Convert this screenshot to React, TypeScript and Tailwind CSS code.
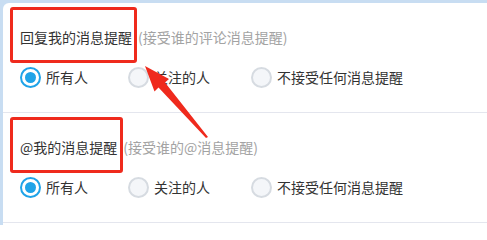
import React from 'react';

type Option = { label: string; checked?: boolean; width: string };

const RED = '#ef2a1d';

function Radio({ checked }: { checked?: boolean }) {
  return checked ? (
    <span className="flex h-[21px] w-[21px] shrink-0 items-center justify-center rounded-full border-2 border-[#1fa3e8] bg-white">
      <span className="h-[11px] w-[11px] rounded-full bg-[#1fa3e8]" />
    </span>
  ) : (
    <span className="h-[21px] w-[21px] shrink-0 rounded-full border-2 border-[#d6dbe1] bg-[#f4f6f9]" />
  );
}

function Section({ title, hint, boxRight, options }: { title: string; hint: string; boxRight: string; options: Option[] }) {
  return (
    <div className="border-b border-[#e4e6ee] px-[17px] pt-[24px] pb-[24px]">
      <div className="flex h-[20px] items-center text-[14px] leading-[20px]">
        <span className="relative text-[#333]">
          {title}
          <span
            className={`absolute top-[-20px] bottom-[-16px] left-[-10px] rounded-[3px] border-[3px] border-[#ef2a1d] ${boxRight}`}
          />
        </span>
        <span className="ml-[6px] text-[#a3a3a3]">{hint}</span>
      </div>
      <div className="mt-[19px] flex h-[22px] items-center text-[14px] text-[#333]">
        {options.map((o) => (
          <label key={o.label} className={`flex items-center gap-[5px] ${o.width}`}>
            <Radio checked={o.checked} />
            <span>{o.label}</span>
          </label>
        ))}
      </div>
    </div>
  );
}

export default function App() {
  const options: Option[] = [
    { label: '所有人', checked: true, width: 'w-[108px]' },
    { label: '关注的人', width: 'w-[123px]' },
    { label: '不接受任何消息提醒', width: 'w-auto' },
  ];

  return (
    <div
      className="relative h-[225px] w-[487px] overflow-hidden bg-[#c8ddf2] pt-[3px] pl-[3px]"
      style={{ fontFamily: '"Noto Sans CJK SC", "Noto Sans", sans-serif' }}
    >
      <div className="h-full rounded-tl-[6px] bg-white">
        <Section title="回复我的消息提醒" hint="(接受谁的评论消息提醒)" boxRight="right-[-5px]" options={options} />
        <Section title="@我的消息提醒" hint="(接受谁的@消息提醒)" boxRight="right-[-6px]" options={options} />
      </div>
      <svg className="pointer-events-none absolute inset-0" width="487" height="225" viewBox="0 0 487 225">
        <polygon
          points="145,66 169,79 165,82.5 208,137 206,138 158.5,87.5 154.5,91.5"
          fill={RED}
        />
      </svg>
    </div>
  );
}
